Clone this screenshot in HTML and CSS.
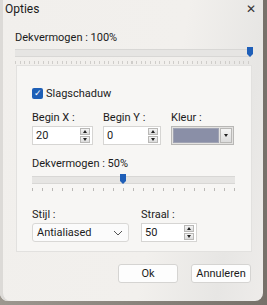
FILE: index.html
```html
<!DOCTYPE html>
<html lang="nl">
<head>
  <meta charset="UTF-8">
  <title>Opties</title>
  <link rel="stylesheet" href="styles.css">
</head>
<body>
  <div class="window">
    <div class="titlebar">
      <span class="title">Opties</span>
      <span class="close">&#x2715;</span>
    </div>

    <div class="content">
      <div class="label top-label">Dekvermogen : 100%</div>
      <div class="slider wide">
        <div class="track"></div>
        <div class="thumb" style="left: 232px"></div>
        <div class="ticks fine"></div>
      </div>

      <div class="group">
        <label class="check">
          <span class="box">&#x2713;</span>
          <span>Slagschaduw</span>
        </label>

        <div class="row fields">
          <div class="field">
            <div class="label">Begin X :</div>
            <div class="spin w61">
              <span class="value">20</span>
              <span class="arrows"><i class="up"></i><i class="down"></i></span>
            </div>
          </div>
          <div class="field">
            <div class="label">Begin Y :</div>
            <div class="spin w57">
              <span class="value">0</span>
              <span class="arrows"><i class="up"></i><i class="down"></i></span>
            </div>
          </div>
          <div class="field">
            <div class="label">Kleur :</div>
            <div class="colorbox">
              <span class="swatch"></span>
              <span class="dropbtn"><i class="down"></i></span>
            </div>
          </div>
        </div>

        <div class="label mid-label">Dekvermogen : 50%</div>
        <div class="slider narrow">
          <div class="track"></div>
          <div class="thumb" style="left: 88px"></div>
          <div class="ticks coarse"></div>
        </div>

        <div class="row fields bottom">
          <div class="field">
            <div class="label">Stijl :</div>
            <div class="select">
              <span>Antialiased</span>
              <svg width="10" height="6" viewBox="0 0 10 6"><path d="M1 1 L5 5 L9 1" fill="none" stroke="#555" stroke-width="1"/></svg>
            </div>
          </div>
          <div class="field">
            <div class="label">Straal :</div>
            <div class="spin w56">
              <span class="value">50</span>
              <span class="arrows"><i class="up"></i><i class="down"></i></span>
            </div>
          </div>
        </div>
      </div>

      <div class="buttons">
        <button type="button">Ok</button>
        <button type="button">Annuleren</button>
      </div>
    </div>
  </div>
</body>
</html>
```

FILE: styles.css
```css
body {
    margin: 0;
    width: 267px;
    height: 305px;
    background: linear-gradient(90deg, #9c978f, #77716a);
    font-family: Roboto, "Noto Sans", sans-serif;
    font-size: 11px;
    color: #1b1b1b;
    overflow: hidden;
}
.window {
    width: 263px;
    height: 301px;
    background: linear-gradient(100deg, #f1efec 0%, #f2f0ed 60%, #e7e6e4 85%, #eeecea 100%);
    border-radius: 0 0 8px 8px;
    box-shadow: inset 3px 0 0 #dcdad7;
    display: flex;
    flex-direction: column;
}
.titlebar {
    height: 18px;
    display: flex;
    align-items: center;
    justify-content: space-between;
    padding: 0 7px 0 5px;
}
.title {
    font-size: 12px;
}
.close {
    font-size: 12px;
    color: #333;
}
.content {
    padding: 13px 0 0 15px;
    display: flex;
    flex-direction: column;
}
.label {
    line-height: 14px;
    height: 14px;
}
.slider {
    position: relative;
    height: 18px;
}
.slider .track {
    margin-top: 4px;
    height: 6px;
    background: #e6e5e3;
    border-top: 1px solid #d8d7d5;
    border-bottom: 1px solid #d8d7d5;
}
.slider .thumb {
    position: absolute;
    top: 2px;
    width: 6px;
    height: 10px;
    background: #1f5fb8;
    clip-path: polygon(0 0, 100% 0, 100% 70%, 50% 100%, 0 70%);
}
.slider .ticks {
    margin-top: 4px;
    height: 3px;
}
.wide {
    width: 236px;
}
.ticks.fine {
    background: repeating-linear-gradient(90deg, #cfcdca 0 1px, transparent 1px 4.66px);
}
.narrow {
    width: 203px;
}
.ticks.coarse {
    background: repeating-linear-gradient(90deg, #bab8b5 0 1px, transparent 1px 10.1px);
}
.group {
    margin: 2px 0 0 1px;
    width: 219px;
    height: 164px;
    padding: 21px 0 0 15px;
    background: #f7f6f4;
    border: 1px solid #e2e1df;
    display: flex;
    flex-direction: column;
}
.check {
    display: flex;
    align-items: center;
    gap: 3px;
    height: 12px;
}
.check .box {
    width: 11px;
    height: 11px;
    border-radius: 2px;
    background: #1e5fb6;
    color: #fff;
    font-size: 9px;
    line-height: 11px;
    text-align: center;
}
.row {
    display: flex;
}
.fields {
    margin-top: 12px;
    gap: 10px;
}
.field .label {
    margin-bottom: 1px;
}
.spin {
    height: 19px;
    box-sizing: border-box;
    border: 1px solid #d6d5d3;
    background: #fff;
    display: flex;
    align-items: center;
    justify-content: space-between;
    padding: 0 2px 0 3px;
}
.w61 { width: 61px; }
.w57 { width: 58px; }
.w56 { width: 56px; }
.arrows {
    width: 10px;
    height: 15px;
    display: flex;
    flex-direction: column;
    gap: 1px;
}
.arrows i, .dropbtn {
    flex: 1;
    background: linear-gradient(#f4f4f4, #dcdcdc);
    border: 1px solid #b9b8b6;
    display: flex;
    align-items: center;
    justify-content: center;
}
i.up::after, i.down::after {
    content: "";
    border-left: 2px solid transparent;
    border-right: 2px solid transparent;
}
i.up::after {
    border-bottom: 3px solid #222;
}
i.down::after {
    border-top: 3px solid #222;
}
.dropbtn i {
    display: flex;
}
.colorbox {
    width: 63px;
    height: 19px;
    box-sizing: border-box;
    border: 1px solid #b8b7b5;
    background: #e3e2e0;
    display: flex;
    padding: 1px;
    gap: 1px;
}
.swatch {
    flex: 1;
    background: #8a8fa7;
    border: 1px solid #a0a3b3;
}
.dropbtn {
    flex: 0 0 10px;
}
.mid-label {
    margin-top: 12px;
}
.narrow {
    margin-top: 1px;
}
.bottom {
    margin-top: 18px;
    gap: 12px;
}
.select {
    width: 97px;
    height: 19px;
    box-sizing: border-box;
    border: 1px solid #d9d8d6;
    border-radius: 3px;
    background: #fbfbfb;
    display: flex;
    align-items: center;
    justify-content: space-between;
    padding: 0 5px 0 4px;
}
.buttons {
    display: flex;
    justify-content: flex-end;
    gap: 13px;
    margin: 12px 12px 0 0;
}
button {
    width: 60px;
    height: 19px;
    font-family: inherit;
    font-size: 11px;
    color: #1b1b1b;
    background: #fdfdfd;
    border: 1px solid #d5d4d2;
    border-radius: 3px;
    padding: 0;
}
```
